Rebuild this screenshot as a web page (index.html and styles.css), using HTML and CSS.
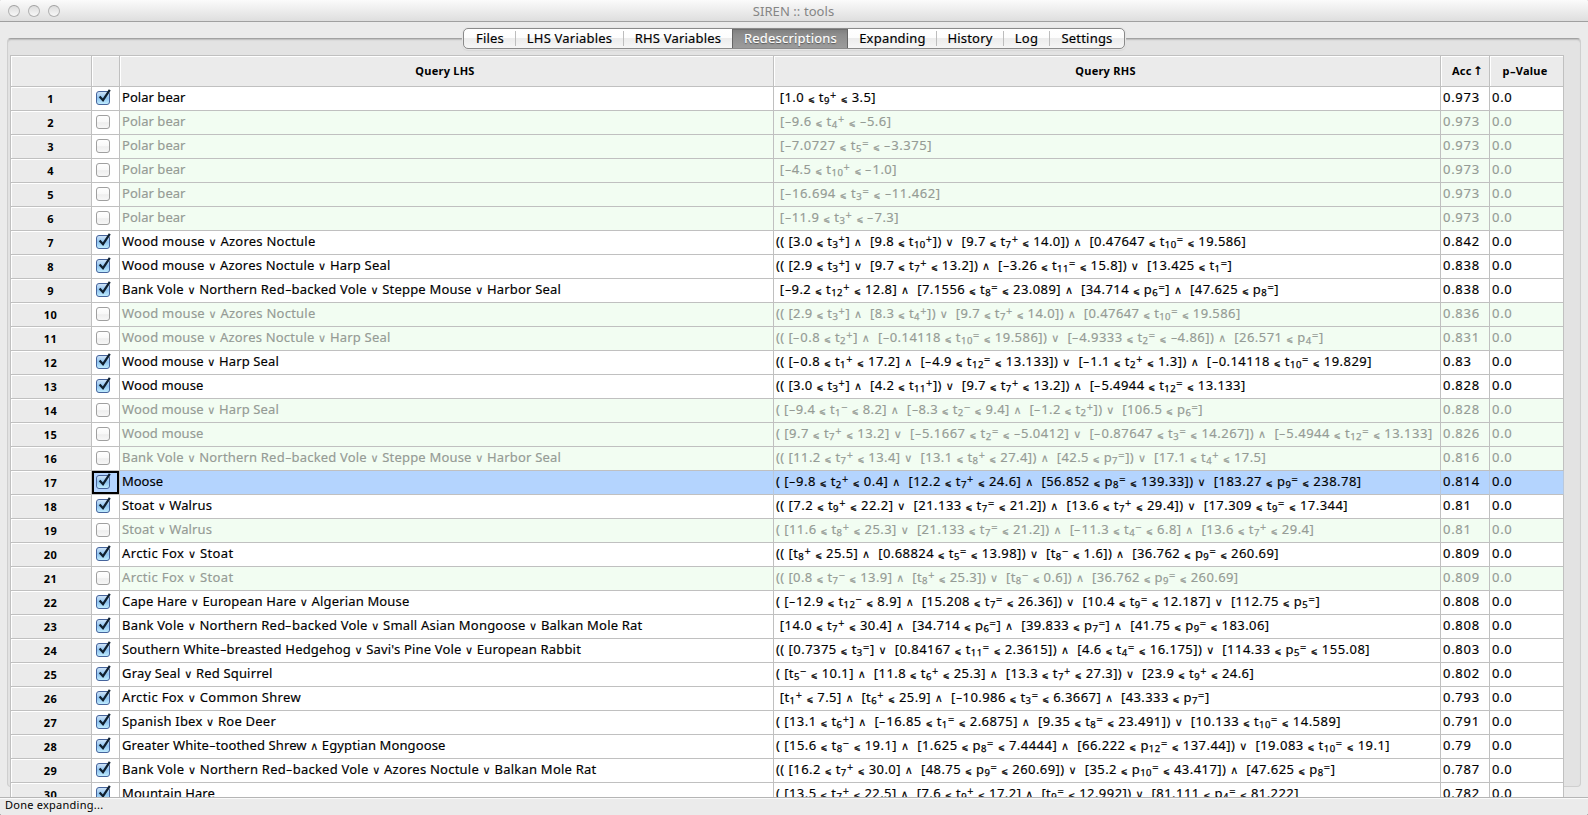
FILE: index.html
```html
<!DOCTYPE html>
<html lang="en">
<head>
<meta charset="utf-8">
<title>SIREN :: tools</title>
<link rel="stylesheet" href="styles.css">
</head>
<body>
<div class="window">
  <header class="titlebar">
    <div class="lights"><span class="light"></span><span class="light"></span><span class="light"></span></div>
    <div class="title">SIREN :: tools</div>
  </header>
  <main class="content">
    <div class="panel"></div>
    <nav class="tabs">
      <span class="tab w-files">Files</span>
      <span class="tab w-lhs">LHS Variables</span>
      <span class="tab w-rhs">RHS Variables</span>
      <span class="tab w-red active">Redescriptions</span>
      <span class="tab w-exp">Expanding</span>
      <span class="tab w-his">History</span>
      <span class="tab w-log">Log</span>
      <span class="tab w-set">Settings</span>
    </nav>
    <section class="table" id="table">
      <div class="row head">
        <div class="hcell"></div>
        <div class="hcell"></div>
        <div class="hcell">Query LHS</div>
        <div class="hcell">Query RHS</div>
        <div class="hcell acc">Acc <span class="arrow">↑</span></div>
        <div class="hcell">p<span class="dash">-</span>Value</div>
      </div>
    </section>
  </main>
  <footer class="status">Done expanding...</footer>
</div>
<script src="rows.js"></script>
</body>
</html>
```
FILE: styles.css
```css
* { box-sizing: border-box; }
body {
  margin: 0;
  width: 1588px;
  height: 815px;
  overflow: hidden;
  background: #000;
  font-family: "Noto Sans", "DejaVu Sans", sans-serif;
  font-size: 13px;
  color: #000;
}
.window {
  width: 1588px;
  height: 815px;
  display: flex;
  flex-direction: column;
  background: #ebebeb;
  border-radius: 1px;
  overflow: hidden;
}
.titlebar {
  position: relative;
  height: 22px;
  flex: none;
  background: linear-gradient(#fbfbfb, #dedede);
  border-bottom: 1px solid #a0a0a0;
}
.lights { display: flex; gap: 8px; padding: 5px 0 0 8px; }
.light {
  width: 12px;
  height: 12px;
  border-radius: 50%;
  border: 1px solid #b2b2b2;
  border-top-color: #a0a0a0;
  background: linear-gradient(#dcdcdc, #f8f8f8);
}
.title {
  position: absolute;
  inset: 0;
  padding-right: 1px;
  text-align: center;
  line-height: 22px;
  letter-spacing: 0.08px;
  color: #858585;
}
.content {
  position: relative;
  flex: none;
  height: 775px;
  overflow: hidden;
}
.panel {
  position: absolute;
  left: 7px;
  top: 16px;
  width: 1574px;
  height: 749px;
  background: #e3e3e3;
  border: 1px solid #cfcfcf;
  border-top: 1px solid #a2a2a2;
  border-radius: 4px;
  box-shadow: inset 0 1px 0 #c2c2c2, inset 0 2px 1px #dadada;
}
.tabs {
  position: relative;
  display: flex;
  width: 662px;
  height: 21px;
  margin: 6px 0 0 463px;
  border: 1px solid #8a8a8a;
  border-radius: 5px;
  background: linear-gradient(#fff, #fdfdfd 45%, #ececec 50%, #f6f6f6);
  box-shadow: 0 0 0 1px #e6e6e6, 0 1px 1px 1px #d6d6d6;
}
.tab {
  display: flex;
  align-items: center;
  justify-content: center;
  height: 19px;
  padding: 0 0 1px 1px;
  letter-spacing: 0.2px;
  position: relative;
  -webkit-text-stroke: 0.15px;
}
.tab + .tab::before {
  content: "";
  position: absolute;
  left: 0;
  top: 2px;
  width: 1px;
  height: 15px;
  background: #bdbdbd;
}
.w-files { width: 51px; }
.w-lhs { width: 108px; }
.w-rhs { width: 109px; }
.w-red { width: 116px; }
.w-exp { width: 88px; }
.w-his { width: 67px; }
.w-log { width: 46px; }
.w-set { width: 75px; }
.tab.active {
  background: linear-gradient(#7d7d7d, #8d8d8d 30%, #9c9c9c);
  color: #fff;
  box-shadow: inset 1px 0 #666, inset -1px 0 #666, inset 0 1px #6e6e6e;
  text-shadow: 0 1px 1px #555;
}
.tab.active::before, .tab.active + .tab::before { display: none; }
.table {
  position: relative;
  width: 1554px;
  margin: 6px 0 0 10px;
  border-top: 1px solid #c0c0c0;
  border-left: 1px solid #c0c0c0;
}
.row {
  display: grid;
  grid-template-columns: 81px 28px 654px 667px 49px 74px;
  height: 24px;
}
.row.head { height: 31px; }
.row > div { border-right: 1px solid #c0c0c0; border-bottom: 1px solid #c0c0c0; overflow: hidden; }
.row > .hcell, .row > .num {
  background: #ebebeb;
  box-shadow: inset 1px 1px #fff;
  font-size: 11px;
  font-weight: 700;
  text-align: center;
  letter-spacing: 0.25px;
}
.hcell { line-height: 30px; padding-right: 3px; }
.row > .acc { padding: 0 0 0 5px; white-space: nowrap; }
.arrow { font-family: "DejaVu Sans", sans-serif; margin-left: -2px; font-size: 12px; }
.row > .num { line-height: 24px; letter-spacing: 0.4px; padding-right: 1px; }
.cell { background: #fff; line-height: 20px; white-space: pre; padding-left: 2px; -webkit-text-stroke: 0.15px; }
.off .cell { background: #f2fdf2; color: #959b95; }
.row .check { background: #fff; padding: 2px 0 0 3px; }
.sel .cell, .sel .check { background: #b4d4fe; }
.row.sel > .cell:nth-child(n+3) { border-right-color: #b9c8dc; }
.sel .check { box-shadow: inset 0 0 0 2px #000; }
.value { letter-spacing: 0.72px; }
.check svg { display: block; }
.dash { display: inline-block; line-height: 1; padding: 0 1.2px; transform: scaleX(1.6); }
.op, .le, .sub, .sup { line-height: 1; }
.op { font-size: 11px; font-family: "DejaVu Sans", sans-serif; }
.le { font-size: 8px; font-family: "DejaVu Sans", sans-serif; position: relative; top: -0.5px; -webkit-text-stroke: 0.3px; }
.sub { font-size: 9.5px; position: relative; top: 2px; -webkit-text-stroke: 0.25px; }
.sup { font-size: 8px; font-family: "DejaVu Sans", sans-serif; position: relative; top: -4px; -webkit-text-stroke: 0.2px; }
.status {
  flex: 1;
  border-top: 1px solid #b5b5b5;
  box-shadow: inset 0 1px #fafafa;
  padding-left: 5px;
  font-size: 11px;
  line-height: 14px;
  letter-spacing: 0.25px;
}
```
FILE: rows.js
```js
// Each entry: enabled, LHS query, LHS right edge, RHS query, RHS right edge, accuracy.
const rows = [
  [1, "Polar bear", 185, " [1.0 < t9+ < 3.5]", 875.5, "0.973"],
  [0, "Polar bear", 185, " [-9.6 < t4+ < -5.6]", 891, "0.973"],
  [0, "Polar bear", 185, " [-7.0727 < t5= < -3.375]", 931.5, "0.973"],
  [0, "Polar bear", 185, " [-4.5 < t10+ < -1.0]", 896.5, "0.973"],
  [0, "Polar bear", 185, " [-16.694 < t3= < -11.462]", 940, "0.973"],
  [0, "Polar bear", 185, " [-11.9 < t3+ < -7.3]", 898.5, "0.973"],
  [1, "Wood mouse v Azores Noctule", 315, "(( [3.0 < t3+] ^  [9.8 < t10+]) v  [9.7 < t7+ < 14.0]) ^  [0.47647 < t10= < 19.586]", 1245.5, "0.842"],
  [1, "Wood mouse v Azores Noctule v Harp Seal", 390, "(( [2.9 < t3+] v  [9.7 < t7+ < 13.2]) ^  [-3.26 < t11= < 15.8]) v  [13.425 < t1=]", 1231.5, "0.838"],
  [1, "Bank Vole v Northern Red-backed Vole v Steppe Mouse v Harbor Seal", 560.5, " [-9.2 < t12+ < 12.8] ^  [7.1556 < t8= < 23.089] ^  [34.714 < p6=] ^  [47.625 < p8=]", 1278.5, "0.838"],
  [0, "Wood mouse v Azores Noctule", 315, "(( [2.9 < t3+] ^  [8.3 < t4+]) v  [9.7 < t7+ < 14.0]) ^  [0.47647 < t10= < 19.586]", 1240, "0.836"],
  [0, "Wood mouse v Azores Noctule v Harp Seal", 390, "(( [-0.8 < t2+] ^  [-0.14118 < t10= < 19.586]) v  [-4.9333 < t2= < -4.86]) ^  [26.571 < p4=]", 1323, "0.831"],
  [1, "Wood mouse v Harp Seal", 278.5, "(( [-0.8 < t1+ < 17.2] ^  [-4.9 < t12= < 13.133]) v  [-1.1 < t2+ < 1.3]) ^  [-0.14118 < t10= < 19.829]", 1371.5, "0.83"],
  [1, "Wood mouse", 203, "(( [3.0 < t3+] ^  [4.2 < t11+]) v  [9.7 < t7+ < 13.2]) ^  [-5.4944 < t12= < 13.133]", 1245, "0.828"],
  [0, "Wood mouse v Harp Seal", 278.5, "( [-9.4 < t1- < 8.2] ^  [-8.3 < t2- < 9.4] ^  [-1.2 < t2+]) v  [106.5 < p6=]", 1202.5, "0.828"],
  [0, "Wood mouse", 203, "( [9.7 < t7+ < 13.2] v  [-5.1667 < t2= < -5.0412] v  [-0.87647 < t3= < 14.267]) ^  [-5.4944 < t12= < 13.133]", 1432, "0.826"],
  [0, "Bank Vole v Northern Red-backed Vole v Steppe Mouse v Harbor Seal", 560.5, "(( [11.2 < t7+ < 13.4] v  [13.1 < t8+ < 27.4]) ^  [42.5 < p7=]) v  [17.1 < t4+ < 17.5]", 1265.5, "0.816"],
  [1, "Moose", 162.5, "( [-9.8 < t2+ < 0.4] ^  [12.2 < t7+ < 24.6] ^  [56.852 < p8= < 139.33]) v  [183.27 < p9= < 238.78]", 1361, "0.814"],
  [1, "Stoat v Walrus", 211.5, "(( [7.2 < t9+ < 22.2] v  [21.133 < t7= < 21.2]) ^  [13.6 < t7+ < 29.4]) v  [17.309 < t9= < 17.344]", 1347.5, "0.81"],
  [0, "Stoat v Walrus", 211.5, "( [11.6 < t8+ < 25.3] v  [21.133 < t7= < 21.2]) ^  [-11.3 < t4- < 6.8] ^  [13.6 < t7+ < 29.4]", 1313.5, "0.81"],
  [1, "Arctic Fox v Stoat", 233, "(( [t8+ < 25.5] ^  [0.68824 < t5= < 13.98]) v  [t8- < 1.6]) ^  [36.762 < p9= < 260.69]", 1278.5, "0.809"],
  [0, "Arctic Fox v Stoat", 233, "(( [0.8 < t7- < 13.9] ^  [t8+ < 25.3]) v  [t8- < 0.6]) ^  [36.762 < p9= < 260.69]", 1238, "0.809"],
  [1, "Cape Hare v European Hare v Algerian Mouse", 409, "( [-12.9 < t12- < 8.9] ^  [15.208 < t7= < 26.36]) v  [10.4 < t9= < 12.187] v  [112.75 < p5=]", 1319.5, "0.808"],
  [1, "Bank Vole v Northern Red-backed Vole v Small Asian Mongoose v Balkan Mole Rat", 642, " [14.0 < t7+ < 30.4] ^  [34.714 < p6=] ^  [39.833 < p7=] ^  [41.75 < p9= < 183.06]", 1269, "0.808"],
  [1, "Southern White-breasted Hedgehog v Savi's Pine Vole v European Rabbit", 580.5, "(( [0.7375 < t3=] v  [0.84167 < t11= < 2.3615]) ^  [4.6 < t4= < 16.175]) v  [114.33 < p5= < 155.08]", 1369.5, "0.803"],
  [1, "Gray Seal v Red Squirrel", 272, "( [t5- < 10.1] ^  [11.8 < t6+ < 25.3] ^  [13.3 < t7+ < 27.3]) v  [23.9 < t9+ < 24.6]", 1253.5, "0.802"],
  [1, "Arctic Fox v Common Shrew", 300.5, " [t1+ < 7.5] ^  [t6+ < 25.9] ^  [-10.986 < t3= < 6.3667] ^  [43.333 < p7=]", 1209, "0.793"],
  [1, "Spanish Ibex v Roe Deer", 275.5, "( [13.1 < t6+] ^  [-16.85 < t1= < 2.6875] ^  [9.35 < t8= < 23.491]) v  [10.133 < t10= < 14.589]", 1340.5, "0.791"],
  [1, "Greater White-toothed Shrew ^ Egyptian Mongoose", 445, "( [15.6 < t8- < 19.1] ^  [1.625 < p8= < 7.4444] ^  [66.222 < p12= < 137.44]) v  [19.083 < t10= < 19.1]", 1389.5, "0.79"],
  [1, "Bank Vole v Northern Red-backed Vole v Azores Noctule v Balkan Mole Rat", 596, "(( [16.2 < t7+ < 30.0] ^  [48.75 < p9= < 260.69]) v  [35.2 < p10= < 43.417]) ^  [47.625 < p8=]", 1335, "0.787"],
  [1, "Mountain Hare", 214.5, "( [13.5 < t7+ < 22.5] ^  [7.6 < t9+ < 17.2] ^  [t9= < 12.992]) v  [81.111 < p4= < 81.222]", 1298.5, "0.782"]
];

const SELECTED = 17;
const SUP = { "+": "+", "=": "=", "-": "−" };
const span = (cls, text) => `<span class="${cls}">${text}</span>`;

function format(query) {
  return query.replace(/([tp])(\d+)([+=-])|<| \^ | v |-/g, (m, name, idx, kind) => {
    if (name) return name + span("sub", idx) + span("sup", SUP[kind]);
    if (m === "<") return span("le", "⩽");
    if (m === "-") return span("dash", "-");
    return " " + span("op", m === " ^ " ? "∧" : "∨") + " ";
  });
}

const box = on => on
  ? `<svg width="18" height="18" viewBox="0 0 18 18"><defs><linearGradient id="b" x1="0" y1="0" x2="0" y2="1"><stop offset="0" stop-color="#d3e6f8"/><stop offset=".5" stop-color="#8fc3f0"/><stop offset="1" stop-color="#c3efff"/></linearGradient></defs><rect x="1.5" y="2.5" width="13" height="13" rx="2.5" fill="url(#b)" stroke="#46649c"/><path d="M4.6 7.4 L8 11.2 L14.8 .8" fill="none" stroke="#10202f" stroke-width="2.2"/></svg>`
  : `<svg width="18" height="18" viewBox="0 0 18 18"><defs><linearGradient id="w" x1="0" y1="0" x2="0" y2="1"><stop offset="0" stop-color="#fff"/><stop offset=".5" stop-color="#f8f8f8"/><stop offset=".55" stop-color="#eee"/><stop offset="1" stop-color="#f8f8f8"/></linearGradient></defs><rect x="1.5" y="2.5" width="13" height="13" rx="2.5" fill="url(#w)" stroke="#a0a0a0"/></svg>`;

const table = document.getElementById("table");
rows.forEach(([on, lhs, lhsEdge, rhs, rhsEdge, acc], i) => {
  const row = document.createElement("div");
  row.className = "row" + (on ? "" : " off") + (i + 1 === SELECTED ? " sel" : "");
  row.innerHTML = `<div class="num">${i + 1}</div><div class="check">${box(on)}</div>` +
    `<div class="cell"><span class="fit" data-edge="${lhsEdge}">${format(lhs)}</span></div>` +
    `<div class="cell"><span class="fit" data-edge="${rhsEdge}">${format(rhs)}</span></div>` +
    `<div class="cell value">${acc}</div><div class="cell value">0.0</div>`;
  table.appendChild(row);
});

// Track each query so that it ends at its measured edge.
document.querySelectorAll(".fit").forEach(el => {
  const r = el.getBoundingClientRect();
  el.style.letterSpacing = (el.dataset.edge - r.right + 0.5) / el.textContent.length + "px";
});
```
